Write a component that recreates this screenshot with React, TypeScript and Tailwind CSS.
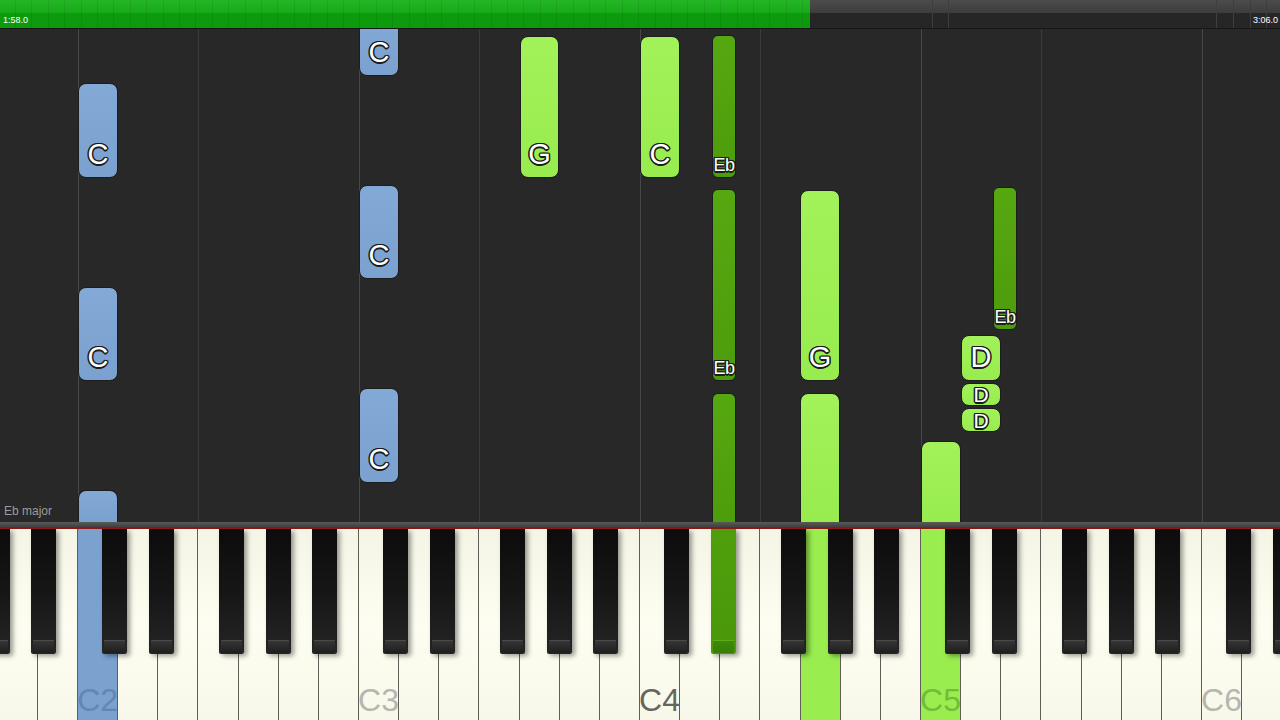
import React from "react";

const C2X = 78;
const OCT = 281;

type NoteColor = "blue" | "green" | "dark";
type LabelKind = "big" | "eb" | "small" | "none";

interface Note {
	x: number;
	w: number;
	top: number;
	bottom: number;
	color: NoteColor;
	label?: string;
	kind: LabelKind;
	open?: boolean;
}

// canvas starts at y=29 on screen, so y values here are screen y - 29
const notes: Note[] = [
	// C2 column
	{ x: 78, w: 40, top: 54, bottom: 149, color: "blue", label: "C", kind: "big" },
	{ x: 78, w: 40, top: 258, bottom: 352, color: "blue", label: "C", kind: "big" },
	{ x: 78, w: 40, top: 461, bottom: 493, color: "blue", kind: "none", open: true },
	// C3 column
	{ x: 359, w: 40, top: -12, bottom: 47, color: "blue", label: "C", kind: "big" },
	{ x: 359, w: 40, top: 156, bottom: 250, color: "blue", label: "C", kind: "big" },
	{ x: 359, w: 40, top: 359, bottom: 454, color: "blue", label: "C", kind: "big" },
	// G3 / C4
	{ x: 520, w: 39, top: 7, bottom: 149, color: "green", label: "G", kind: "big" },
	{ x: 640, w: 40, top: 7, bottom: 149, color: "green", label: "C", kind: "big" },
	// Eb4
	{ x: 712, w: 24, top: 6, bottom: 149, color: "dark", label: "Eb", kind: "eb" },
	{ x: 712, w: 24, top: 160, bottom: 352, color: "dark", label: "Eb", kind: "eb" },
	{ x: 712, w: 24, top: 364, bottom: 493, color: "dark", kind: "none", open: true },
	// G4
	{ x: 800, w: 40, top: 161, bottom: 352, color: "green", label: "G", kind: "big" },
	{ x: 800, w: 40, top: 364, bottom: 493, color: "green", kind: "none", open: true },
	// C5
	{ x: 921, w: 40, top: 412, bottom: 493, color: "green", kind: "none", open: true },
	// D5
	{ x: 961, w: 40, top: 306, bottom: 352, color: "green", label: "D", kind: "big" },
	{ x: 961, w: 40, top: 354, bottom: 377, color: "green", label: "D", kind: "small" },
	{ x: 961, w: 40, top: 379, bottom: 403, color: "green", label: "D", kind: "small" },
	// Eb5
	{ x: 993, w: 24, top: 158, bottom: 301, color: "dark", label: "Eb", kind: "eb" },
];

const noteFill: Record<NoteColor, string> = {
	blue: "bg-gradient-to-b from-[#83a9d6] to-[#7aa1cf]",
	green: "bg-gradient-to-b from-[#a2f25a] to-[#98ec4e]",
	dark: "bg-gradient-to-b from-[#56a811] to-[#4d9c0c]",
};

const outline =
	"[text-shadow:-1px_-1px_0_#1c1c1c,1px_-1px_0_#1c1c1c,-1px_1px_0_#1c1c1c,1px_1px_0_#1c1c1c,0_1.5px_0_#1c1c1c,0_-1.5px_0_#1c1c1c,1.5px_0_0_#1c1c1c,-1.5px_0_0_#1c1c1c]";

const gridLines = [
	{ x: 78, c: "bg-[#474747]" },
	{ x: 198, c: "bg-[#3b3b3b]" },
	{ x: 359, c: "bg-[#474747]" },
	{ x: 479, c: "bg-[#3b3b3b]" },
	{ x: 640, c: "bg-[#474747]" },
	{ x: 760, c: "bg-[#3b3b3b]" },
	{ x: 921, c: "bg-[#474747]" },
	{ x: 1041, c: "bg-[#3b3b3b]" },
	{ x: 1202, c: "bg-[#474747]" },
];

const whiteIdx = Array.from({ length: 32 }, (_, n) => n - 2);
const litWhite: Record<number, string> = {
	0: "bg-[#7ba1cf]",
	18: "bg-[#99ed4f]",
	21: "bg-[#99ed4f]",
};
const keyLabels: Record<number, { t: string; c: string }> = {
	0: { t: "C2", c: "text-[#6486b2]" },
	7: { t: "C3", c: "text-[#b6b6ae]" },
	14: { t: "C4", c: "text-[#66665f]" },
	21: { t: "C5", c: "text-[#74bb3a]" },
	28: { t: "C6", c: "text-[#b6b6ae]" },
};

const blackOffsets = [24, 71, 141, 188, 234];
const blackKeys: { x: number; lit: boolean }[] = [];
for (let k = -1; k <= 4; k++) {
	const c = C2X + k * OCT;
	blackOffsets.forEach((o) => {
		const x = c + o;
		if (x + 25 > 0 && x < 1280) blackKeys.push({ x, lit: x === 711 });
	});
}

const greenTicks = Array.from({ length: 49 }, (_, i) => Math.round(15 + i * 16.4)).filter(
	(x) => x < 808
);
const darkTicks = [932, 948, 1216, 1233, 1250, 1266];

function NoteBlock({ n }: { n: Note }) {
	const radius = n.w < 30 ? "rounded-[6px]" : "rounded-[8px]";
	const align =
		n.kind === "small"
			? "items-center"
			: n.kind === "eb"
				? "items-end pb-[3px]"
				: "items-end pb-[8px]";
	const size =
		n.kind === "big"
			? "text-[29px]"
			: n.kind === "small"
				? "text-[21px]"
				: "text-[18px]";
	return (
		<div
			className={`absolute flex justify-center border border-[#1d1d1d] ${radius} ${
				n.open ? "rounded-b-none border-b-0" : ""
			} ${noteFill[n.color]} ${align}`}
			style={{
				left: n.x,
				top: n.top,
				width: n.w,
				height: n.bottom - n.top,
			}}
		>
			{n.label && (
				<span
					className={`leading-none text-white ${size} ${outline} ${
						n.kind === "eb" ? "tracking-[-0.5px]" : ""
					}`}
				>
					{n.label}
				</span>
			)}
		</div>
	);
}

export default function App() {
	return (
		<div className="flex h-[720px] w-[1280px] flex-col overflow-hidden bg-[#282828] font-['Liberation_Sans',Arial,sans-serif]">
			{/* progress bar */}
			<div className="relative flex h-[29px] shrink-0 border-b border-[#161616]">
				<div className="flex w-[810px] flex-col">
					<div className="h-[13px] bg-gradient-to-b from-[#25b525] to-[#17aa17]" />
					<div className="flex-1 bg-[#0d9a0d]" />
				</div>
				<div className="flex flex-1 flex-col">
					<div className="h-[13px] bg-gradient-to-b from-[#4c4c4c] to-[#3d3d3d]" />
					<div className="flex-1 bg-[#262626]" />
				</div>
				{greenTicks.map((x) => (
					<div
						key={x}
						className="absolute inset-y-0 w-px bg-[rgba(0,0,0,0.07)]"
						style={{ left: x }}
					/>
				))}
				{darkTicks.map((x) => (
					<div
						key={x}
						className="absolute inset-y-0 w-px bg-[#3e3e3e]"
						style={{ left: x }}
					/>
				))}
				<span className="absolute bottom-[3px] left-[3px] text-[9px] leading-none text-white">
					1:58.0
				</span>
				<span className="absolute bottom-[3px] left-[1253px] text-[9px] leading-none text-white">
					3:06.0
				</span>
			</div>

			{/* falling notes */}
			<div className="relative flex-1 overflow-hidden bg-[#282828]">
				{gridLines.map((g) => (
					<div
						key={g.x}
						className={`absolute inset-y-0 w-px ${g.c}`}
						style={{ left: g.x }}
					/>
				))}
				{notes.map((n, i) => (
					<NoteBlock key={i} n={n} />
				))}
				<span className="absolute bottom-[5px] left-[4px] text-[12px] leading-none text-[#9c9c9c]">
					Eb major
				</span>
			</div>

			{/* keyboard rail */}
			<div className="h-[5px] shrink-0 bg-gradient-to-b from-[#5a5a5a] to-[#404040]" />
			<div className="h-[2px] shrink-0 bg-[#8d1717]" />

			{/* keyboard */}
			<div className="relative h-[191px] shrink-0 overflow-hidden bg-[#fbfbee]">
				<div className="ml-[-2.29px] flex h-full">
					{whiteIdx.map((i) => {
						const lbl = keyLabels[i];
						return (
							<div
								key={i}
								className={`flex h-full w-[40.143px] shrink-0 items-end justify-center border-r border-[#5f5f58] pb-[4px] ${
									litWhite[i] ??
									"bg-gradient-to-b from-[#f5f5e6] via-[#fdfdf1] to-[#f8f8ea]"
								}`}
							>
								{lbl && (
									<span className={`text-[32px] leading-none ${lbl.c}`}>
										{lbl.t}
									</span>
								)}
							</div>
						);
					})}
				</div>
				{blackKeys.map((b) => (
					<div
						key={b.x}
						className={`absolute top-0 flex h-[125px] w-[25px] flex-col justify-end rounded-b-[2px] shadow-[3px_2px_5px_rgba(0,0,0,0.4)] ${
							b.lit
								? "bg-gradient-to-b from-[#4f9f0c] to-[#4a980b]"
								: "bg-gradient-to-b from-[#0c0c0c] via-[#161616] to-[#252525]"
						}`}
						style={{ left: b.x }}
					>
						<div
							className={`mx-[2px] mb-[1px] h-[13px] rounded-b-[2px] border-t ${
								b.lit
									? "border-[#5cae18] bg-gradient-to-b from-[#3f8a0a] to-[#387c08]"
									: "border-[#4a4a4a] bg-gradient-to-b from-[#363636] to-[#1e1e1e]"
							}`}
						/>
					</div>
				))}
			</div>
		</div>
	);
}
